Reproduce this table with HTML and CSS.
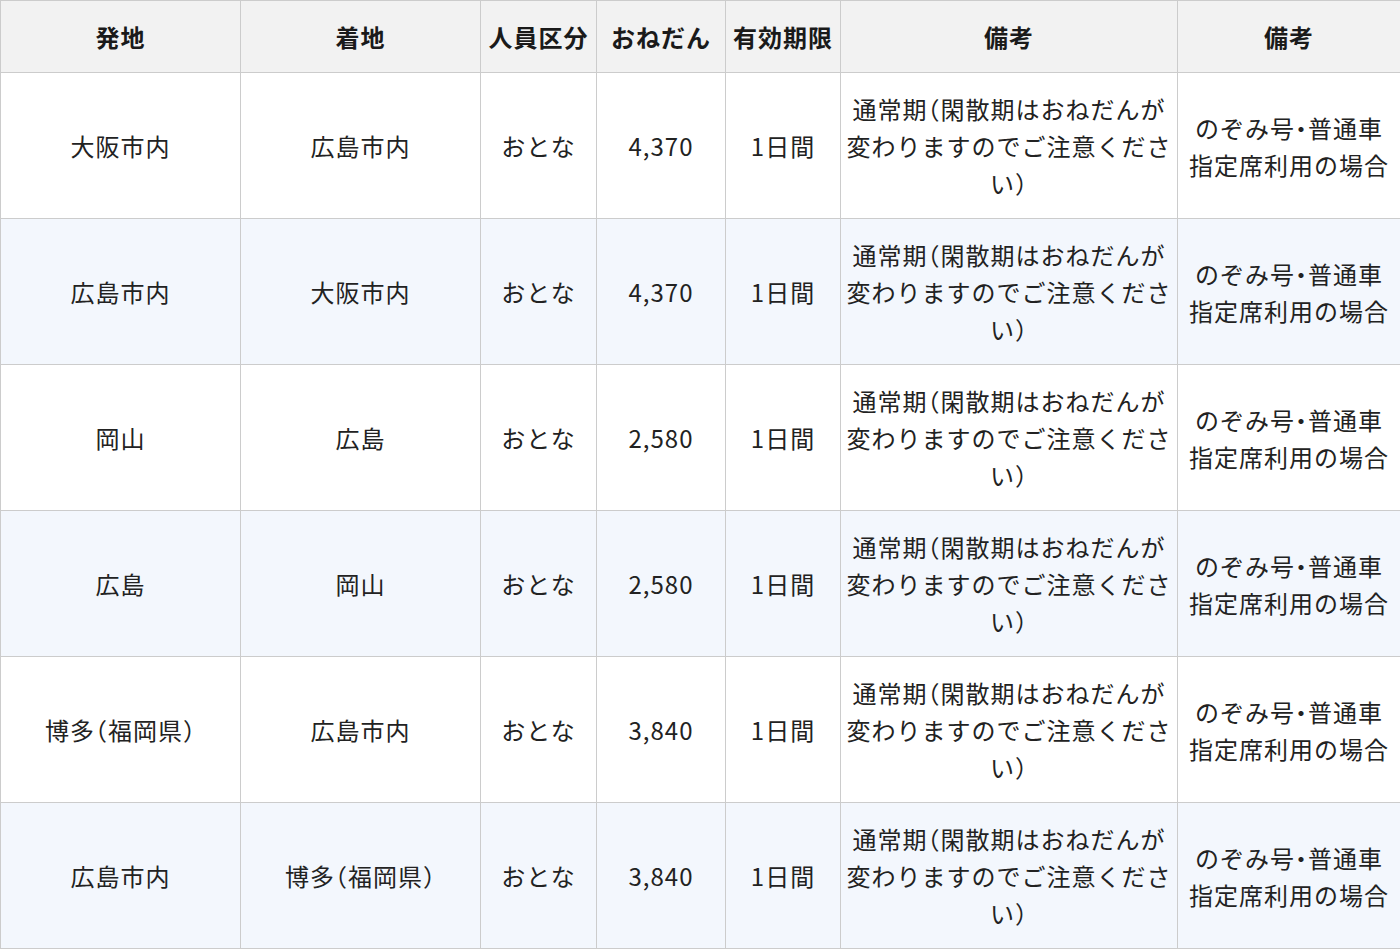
FILE: index.html
```html
<!DOCTYPE html>
<html lang="ja">
<head>
<meta charset="utf-8">
<title>おねだん</title>
<link rel="stylesheet" href="styles.css">
</head>
<body>
<table class="fare">
  <colgroup>
    <col class="c-from"><col class="c-to"><col class="c-person"><col class="c-price"><col class="c-term"><col class="c-note"><col class="c-note2">
  </colgroup>
  <thead>
    <tr><th>発地</th><th>着地</th><th>人員区分</th><th>おねだん</th><th>有効期限</th><th>備考</th><th>備考</th></tr>
  </thead>
  <tbody>
    <tr><td>大阪市内</td><td>広島市内</td><td>おとな</td><td>4,370</td><td>1日間</td><td class="note">通常期（閑散期はおねだんが変わりますのでご注意ください）</td><td class="note2">のぞみ号・普通車指定席利用の場合</td></tr>
    <tr class="alt"><td>広島市内</td><td>大阪市内</td><td>おとな</td><td>4,370</td><td>1日間</td><td class="note">通常期（閑散期はおねだんが変わりますのでご注意ください）</td><td class="note2">のぞみ号・普通車指定席利用の場合</td></tr>
    <tr><td>岡山</td><td>広島</td><td>おとな</td><td>2,580</td><td>1日間</td><td class="note">通常期（閑散期はおねだんが変わりますのでご注意ください）</td><td class="note2">のぞみ号・普通車指定席利用の場合</td></tr>
    <tr class="alt"><td>広島</td><td>岡山</td><td>おとな</td><td>2,580</td><td>1日間</td><td class="note">通常期（閑散期はおねだんが変わりますのでご注意ください）</td><td class="note2">のぞみ号・普通車指定席利用の場合</td></tr>
    <tr><td>博多（福岡県）</td><td>広島市内</td><td>おとな</td><td>3,840</td><td>1日間</td><td class="note">通常期（閑散期はおねだんが変わりますのでご注意ください）</td><td class="note2">のぞみ号・普通車指定席利用の場合</td></tr>
    <tr class="alt"><td>広島市内</td><td>博多（福岡県）</td><td>おとな</td><td>3,840</td><td>1日間</td><td class="note">通常期（閑散期はおねだんが変わりますのでご注意ください）</td><td class="note2">のぞみ号・普通車指定席利用の場合</td></tr>
  </tbody>
</table>
</body>
</html>
```
FILE: styles.css
```css
html, body {
  margin: 0;
  padding: 0;
  background: #fff;
}
body {
  font-family: "Noto Sans CJK JP", "Noto Sans", sans-serif;
  color: #222;
}
.fare {
  width: 1400px;
  table-layout: fixed;
  border-collapse: collapse;
  font-size: 24px;
  letter-spacing: 1px;
  font-feature-settings: "halt";
}
.c-from { width: 240px; }
.c-to { width: 240px; }
.c-person { width: 116px; }
.c-price { width: 129px; }
.c-term { width: 115px; }
.c-note { width: 337px; }
.c-note2 { width: 223px; }
.fare th,
.fare td {
  border: 1px solid #cccccc;
  text-align: center;
  vertical-align: middle;
  line-height: 37px;
}
.fare th {
  background: #f2f2f2;
  font-weight: 700;
  height: 71px;
  padding: 0 2px;
  color: #1a1a1a;
}
.fare td {
  height: 145px;
  padding: 0 4px;
}
.fare td.note2 {
  padding: 0 8px;
}
.fare tr.alt td {
  background: #f3f7fd;
}
```
